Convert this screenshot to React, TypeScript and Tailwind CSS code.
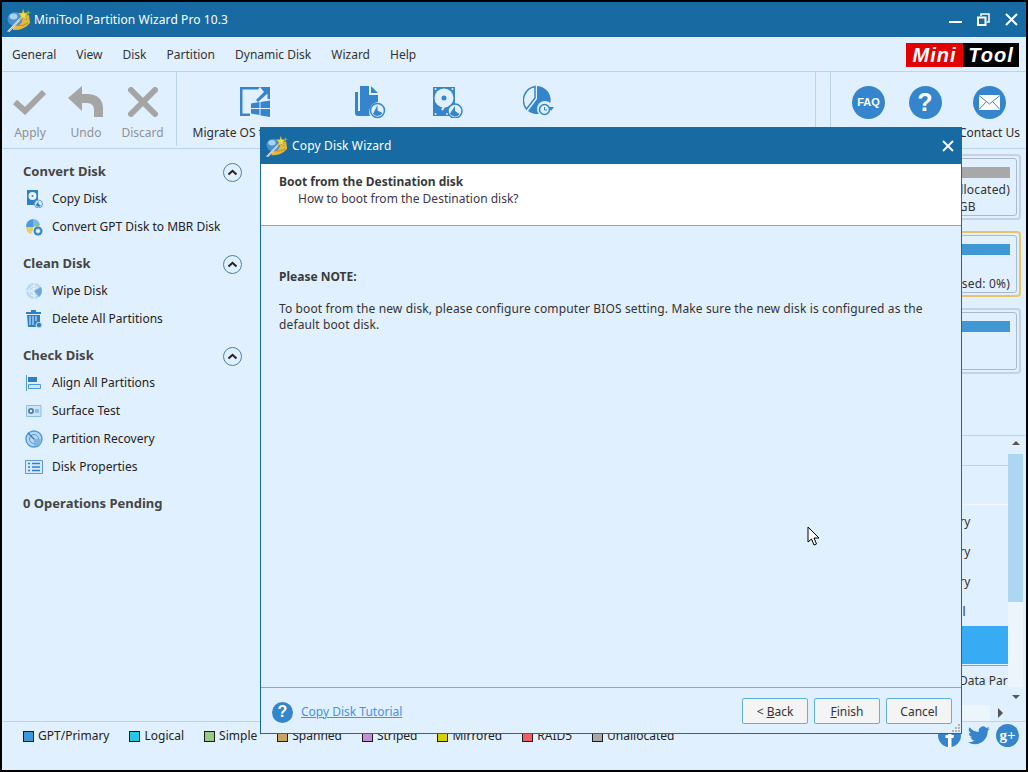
import type { ReactNode } from "react"

const FONT = "font-['Noto_Sans','Liberation_Sans',sans-serif]"

function WandLogo({ size = 24 }: { size?: number }) {
  return (
    <svg width={size} height={size} viewBox="0 0 24 24">
      <path d="M6 8 L22 7 L23 15 Q16 23 6 22 Z" fill="#e6b93a" />
      <ellipse cx="8" cy="11" rx="7.5" ry="7" fill="#4a8fd0" />
      <ellipse cx="6.5" cy="8.5" rx="4" ry="3" fill="#a9d3f2" />
      <path d="M1 24 L16 8" stroke="#f2f2f2" strokeWidth="2" />
      <path d="M1 24 L16 8" stroke="#777" strokeWidth="0.6" />
      <path d="M16 1 L17.5 5 L21.5 5 L18.5 8 L20 12 L16 10 L13 12 L14 8 L11 5 L15 5 Z" fill="#f5d94a" stroke="#7a8f2a" strokeWidth="0.5" />
      <path d="M21 2 l1 2 l2 .5 l-2 1 l-1 2 l-.6-2 l-1.8-.8 l1.8-.6 Z" fill="#7fae3a" />
      <path d="M10 17 Q15 19 21 15" stroke="#b98a20" strokeWidth="1" fill="none" />
    </svg>
  )
}

function MigrateIcon() {
  return (
    <svg width="32" height="32" viewBox="0 0 32 32" fill="#3585cc">
      <path d="M21 1 H1 V30 H11 V27.5 H3.5 V3.5 H19 Z" />
      <path d="M21 1 H31 V11 L28 8 L19 16 L17 14 L25 6 Z" />
      <path d="M28.5 9 H31 V13 H28.5 Z" />
      <path d="M12 17.5 L20.5 16 V22 H12 Z M21.5 16 L31 14.5 V22 H21.5 Z M12 23 H20.5 V29 L12 27.5 Z M21.5 23 H31 V31 L21.5 29.5 Z" />
    </svg>
  )
}

function CopyPartIcon() {
  return (
    <svg width="32" height="34" viewBox="0 0 32 34">
      <path d="M6 1 H15 V10 H24 V17 A10 10 0 0 0 16 31 H4 A3 3 0 0 1 1 28 V7 H4 V26 H6 Z" fill="#3585cc" />
      <path d="M17 1 L24 8 H17 Z" fill="#3585cc" />
      <circle cx="23.5" cy="25.5" r="7" fill="#e1f0fe" stroke="#3585cc" strokeWidth="1.5" />
      <path d="M23.5 20 V25.5 L28.5 28 A6 6 0 0 1 19 29 Z" fill="#3585cc" />
    </svg>
  )
}

function DiskClockIcon() {
  return (
    <svg width="30" height="32" viewBox="0 0 30 32">
      <path fillRule="evenodd" d="M0 1 H22 V30 H0 Z" fill="#3585cc" />
      <circle cx="11" cy="12" r="9.5" fill="#e1f0fe" />
      <circle cx="11" cy="12" r="2.5" fill="#3585cc" />
      <path d="M9 24 L14 16" stroke="#e1f0fe" strokeWidth="2" />
      <circle cx="2.5" cy="3" r="1" fill="#e1f0fe" />
      <circle cx="19.5" cy="3" r="1" fill="#e1f0fe" />
      <circle cx="2.5" cy="28" r="1" fill="#e1f0fe" />
      <circle cx="14" cy="28" r="1" fill="#e1f0fe" />
      <circle cx="22" cy="25" r="7" fill="#e1f0fe" stroke="#3585cc" strokeWidth="1.5" />
      <path d="M22 20 V25 L26.5 28 A5.5 5.5 0 0 1 17 27.5 Z" fill="#3585cc" />
    </svg>
  )
}

function PieClockIcon() {
  return (
    <svg width="32" height="34" viewBox="0 0 32 34">
      <path d="M14 1 A14 14 0 1 1 5 26 L14 14 Z" fill="#3585cc" />
      <path d="M12 1.5 V13 L3.5 24 A14 14 0 0 1 12 1.5 Z" fill="none" stroke="#3585cc" strokeWidth="1.5" />
      <circle cx="22" cy="24" r="8" fill="#e1f0fe" />
      <circle cx="21.5" cy="24.5" r="5" fill="none" stroke="#3585cc" strokeWidth="1.5" />
      <path d="M21.5 22 V25 H24" fill="none" stroke="#3585cc" strokeWidth="1" />
      <path d="M26 22 H31 L28 26 Z" fill="#3585cc" />
    </svg>
  )
}

// labels of the middle buttons sit behind the dialog, so they are left out
function ToolButton({ width, icon, label, muted }: { width: string; icon: ReactNode; label?: string; muted?: boolean }) {
  return (
    <div className={`${width} flex flex-col items-center shrink-0`}>
      <div className="h-[51px] flex items-center justify-center pt-[9px]">{icon}</div>
      {label && (
        <span className={`mt-[1px] text-[12px] leading-[18px] whitespace-nowrap ${muted ? "text-[#8f9296]" : "text-[#2c2c2c]"}`}>{label}</span>
      )}
    </div>
  )
}

function Circle({ children }: { children: ReactNode }) {
  return <div className="w-[33px] h-[33px] rounded-full bg-[#3585cc] flex items-center justify-center text-white">{children}</div>
}

function Chevron() {
  return (
    <div className="w-[19px] h-[19px] rounded-full border border-[#4d7ea8] flex items-center justify-center">
      <svg width="11" height="7" viewBox="0 0 11 7">
        <path d="M1.5 5.5 L5.5 1.8 L9.5 5.5" fill="none" stroke="#222" strokeWidth="2" />
      </svg>
    </div>
  )
}

const smallIcons: Record<string, ReactNode> = {
  copy: (
    <svg width="18" height="18" viewBox="0 0 18 18">
      <path d="M2 0 H13 V15 H2 Z" fill="#2f7fc4" />
      <circle cx="7.5" cy="6" r="4" fill="#e8f3fc" />
      <circle cx="7.5" cy="6" r="1" fill="#2f7fc4" />
      <circle cx="13.5" cy="14" r="4" fill="#e1f0fe" stroke="#5b9bd5" />
      <path d="M13.5 11 V14 L16 15.5 A3 3 0 0 1 10.8 15 Z" fill="#2f7fc4" />
    </svg>
  ),
  convert: (
    <svg width="18" height="18" viewBox="0 0 18 18">
      <path d="M8 1 A7.5 7.5 0 0 0 1 9 H8 Z" fill="#4f9ad8" />
      <path d="M8 1 A7.5 7.5 0 0 1 15 7 L8 9 Z" fill="#7bb8e8" />
      <path d="M1 9 A7.5 7.5 0 0 0 6 16 L9 9 Z" fill="#e9cf62" />
      <path d="M11 5 L15 7 L11 9 Z" fill="#8cc26a" />
      <circle cx="13" cy="13" r="4.5" fill="#3585cc" />
      <path d="M13 10.5 V15.5 M10.8 11.8 L15.2 14.2 M15.2 11.8 L10.8 14.2" stroke="#fff" strokeWidth="1.2" />
    </svg>
  ),
  wipe: (
    <svg width="18" height="18" viewBox="0 0 18 18">
      <circle cx="9" cy="9" r="8" fill="#b9d8f0" />
      <circle cx="9" cy="9" r="5" fill="none" stroke="#e9f4fc" />
      <circle cx="9" cy="9" r="2.5" fill="none" stroke="#e9f4fc" />
      <path d="M9 1 V17 M1 9 H17" stroke="#e9f4fc" />
      <path d="M9 9 L16 5 A8 8 0 0 1 14 15 Z" fill="#6fa8d8" />
    </svg>
  ),
  trash: (
    <svg width="18" height="18" viewBox="0 0 18 18">
      <path d="M6 0 H11 V2 H16 V4 H1 V2 H6 Z" fill="#2f7fc4" />
      <path d="M2 5 H15 V12 H13 A4 4 0 0 0 11 17 H3 Z" fill="#2f7fc4" />
      <path d="M5 6 V15 M8 6 V15 M11 6 V11" stroke="#e1f0fe" />
      <circle cx="14" cy="15" r="2.7" fill="#2f7fc4" stroke="#e1f0fe" strokeWidth="0.6" />
    </svg>
  ),
  align: (
    <svg width="18" height="18" viewBox="0 0 18 18">
      <path d="M1 1 H2 V17 H1 Z" fill="#4f9ad8" />
      <path d="M3 3 H12 V8 H3 Z" fill="#2f7fc4" />
      <path d="M3.5 10.5 H15.5 V14.5 H3.5 Z" fill="#cfe4f6" stroke="#4f9ad8" />
    </svg>
  ),
  surface: (
    <svg width="18" height="18" viewBox="0 0 18 18">
      <path d="M1.5 3.5 H16 V14.5 H1.5 Z" fill="#cfe4f6" stroke="#8fbde2" />
      <circle cx="6" cy="9" r="3" fill="#4f7fa8" />
      <circle cx="6" cy="9" r="1.2" fill="#e1f0fe" />
      <path d="M10 7 H14 V11 H10 Z" fill="#8fbde2" />
    </svg>
  ),
  recovery: (
    <svg width="18" height="18" viewBox="0 0 18 18">
      <circle cx="9" cy="9" r="8" fill="#b9d8f0" stroke="#4f9ad8" strokeWidth="1.4" />
      <circle cx="9" cy="9" r="4.5" fill="none" stroke="#4f9ad8" />
      <path d="M3 3 L10 10" stroke="#2f7fc4" strokeWidth="1.4" />
      <path d="M9 9 L16 9 A7 7 0 0 1 9 16 Z" fill="#7fb2de" />
    </svg>
  ),
  props: (
    <svg width="18" height="18" viewBox="0 0 18 18">
      <path d="M0.5 2.5 H17.5 V15.5 H0.5 Z" fill="#d8eafa" stroke="#5b9bd5" />
      <path d="M3 5.5 H5 M7 5.5 H15 M3 9 H5 M7 9 H15 M3 12.5 H5 M7 12.5 H15" stroke="#2f7fc4" strokeWidth="1.3" />
    </svg>
  ),
}

const groups = [
  {
    title: "Convert Disk",
    items: [
      { icon: "copy", label: "Copy Disk" },
      { icon: "convert", label: "Convert GPT Disk to MBR Disk" },
    ],
  },
  {
    title: "Clean Disk",
    items: [
      { icon: "wipe", label: "Wipe Disk" },
      { icon: "trash", label: "Delete All Partitions" },
    ],
  },
  {
    title: "Check Disk",
    items: [
      { icon: "align", label: "Align All Partitions" },
      { icon: "surface", label: "Surface Test" },
      { icon: "recovery", label: "Partition Recovery" },
      { icon: "props", label: "Disk Properties" },
    ],
  },
]

const legend = [
  { label: "GPT/Primary", color: "bg-[#3f97d6]" },
  { label: "Logical", color: "bg-[#27c7e8]" },
  { label: "Simple", color: "bg-[#9acb85]" },
  { label: "Spanned", color: "bg-[#c9a55c]" },
  { label: "Striped", color: "bg-[#c58fd6]" },
  { label: "Mirrored", color: "bg-[#d8cf00]" },
  { label: "RAID5", color: "bg-[#f06060]" },
  { label: "Unallocated", color: "bg-[#a8a8a8]" },
]

function DiskCard({ selected, bar, lines }: { selected?: boolean; bar: string; lines: string[] }) {
  return (
    <div className={`h-[66px] w-[200px] rounded-[4px] border-2 p-[2px] ${selected ? "border-[#e8c566]" : "border-[#c4d2e4]"}`}>
      <div className="h-full border border-[#aab9d0] rounded-[3px] pr-[6px] pt-[8px] flex flex-col items-end">
        <div className={`h-[11px] w-full shrink-0 ${bar}`} />
        <div className="mt-[3px] text-[12px] leading-[17px] tracking-[0.2px] text-[#333] text-left whitespace-nowrap">
          {lines.map((l, i) => (
            <div key={i} className={l.endsWith("GB") ? "-ml-[9px]" : ""}>{l}</div>
          ))}
        </div>
      </div>
    </div>
  )
}

export default function App() {
  return (
    <div className={`${FONT} relative w-[1028px] h-[772px] overflow-hidden bg-black p-[2px]`}>
      <div className="h-full flex flex-col bg-[#e1f0fe]">
        {/* Title bar */}
        <div className="h-[35px] shrink-0 bg-[#186aa3] flex items-center pl-[5px] pr-[8px] text-white">
          <WandLogo />
          <span className="ml-[3px] text-[12px] tracking-[0.1px]">MiniTool Partition Wizard Pro 10.3</span>
          <div className="ml-auto flex items-center gap-[15px]">
            <svg width="13" height="13" viewBox="0 0 13 13"><path d="M0 9 H13" stroke="#fff" strokeWidth="2" /></svg>
            <svg width="13" height="13" viewBox="0 0 13 13" fill="none" stroke="#fff"><path d="M1 4.5 H8.5 V12 H1 Z" strokeWidth="2" /><path d="M4 3 V1 H12 V9 H9.5" strokeWidth="1.5" /></svg>
            <svg width="13" height="13" viewBox="0 0 13 13"><path d="M1 1 L12 12 M12 1 L1 12" stroke="#fff" strokeWidth="2" /></svg>
          </div>
        </div>
        {/* Menu */}
        <div className="h-[35px] shrink-0 border-t border-t-white border-b border-b-[#b9d5e8] flex items-center pl-[10px] pr-[7px] text-[12px] text-[#333]">
          <div className="flex gap-[20px] pt-[1px]">
            {["General", "View", "Disk", "Partition", "Dynamic Disk", "Wizard", "Help"].map((m) => (
              <span key={m}>{m}</span>
            ))}
          </div>
          <div className="ml-auto flex h-[24px] w-[113px] font-['Liberation_Sans',sans-serif] italic font-bold text-[20px] leading-[24px] text-white">
            <span className="w-[57px] bg-[#e30000] text-center tracking-[1px]">Mini</span>
            <span className="w-[56px] bg-black text-center tracking-[1px]">Tool</span>
          </div>
        </div>
        {/* Toolbar */}
        <div className="h-[77px] shrink-0 border-b border-[#b9d5e8] flex">
          <ToolButton width="w-[56px]" muted label="Apply" icon={
            <svg width="34" height="26" viewBox="0 0 34 26"><path d="M2 13 L12 22 L31 3" fill="none" stroke="#a5a5a5" strokeWidth="6" /></svg>
          } />
          <ToolButton width="w-[56px]" muted label="Undo" icon={
            <svg width="36" height="32" viewBox="0 0 36 32"><path d="M0 12 L14 0 V8 H20 Q35 9 35 23 V31 H26 V24 Q26 17 19 17 H14 V25 Z" fill="#a5a5a5" /></svg>
          } />
          <ToolButton width="w-[57px]" muted label="Discard" icon={
            <svg width="30" height="30" viewBox="0 0 30 30"><path d="M3 3 L27 27 M27 3 L3 27" stroke="#a5a5a5" strokeWidth="6" strokeLinecap="round" /></svg>
          } />
          <div className="w-[6px] mb-[2px] border-r border-[#b9d5e8]" />
          <ToolButton width="w-[156px]" label="Migrate OS to SSD/HD" icon={<MigrateIcon />} />
          <ToolButton width="w-[74px]" icon={<CopyPartIcon />} />
          <ToolButton width="w-[82px]" icon={<DiskClockIcon />} />
          <ToolButton width="w-[100px]" icon={<PieClockIcon />} />
          <div className="w-[227px] border-r border-[#b9d5e8] mb-[2px]" />
          <div className="w-[15px] border-r border-[#b9d5e8] mb-[2px]" />
          <div className="w-[9px]" />
          <ToolButton width="w-[57px]" icon={<Circle><span className="text-[11px] font-bold font-['Liberation_Sans',sans-serif]">FAQ</span></Circle>} />
          <ToolButton width="w-[56px]" icon={<Circle><span className="text-[25px] font-bold leading-none font-['Liberation_Sans',sans-serif]">?</span></Circle>} />
          <ToolButton width="w-[73px]" label="Contact Us" icon={
            <Circle>
              <svg width="21" height="15" viewBox="0 0 21 15"><path d="M0 0 H21 V15 H0 Z" fill="#fff" /><path d="M0 0.5 L10.5 9 L21 0.5 M0 14.5 L7.5 6.5 M21 14.5 L13.5 6.5" fill="none" stroke="#3585cc" /></svg>
            </Circle>
          } />
        </div>
        {/* Main */}
        <div className="flex-1 min-h-0 flex border-b border-[#b9d5e8]">
          <div className="w-[259px] shrink-0 pl-[21px] pr-[19px] pt-[11px]">
            {groups.map((g) => (
              <div key={g.title} className="mb-[11px]">
                <div className="h-[24px] mb-[1px] flex items-center justify-between text-[13px] font-bold text-[#454545]">
                  <span>{g.title}</span>
                  <Chevron />
                </div>
                {g.items.map((it) => (
                  <div key={it.label} className="h-[28px] flex items-center text-[12px] text-[#222]">
                    <span className="w-[29px] pl-[2px] flex">{smallIcons[it.icon]}</span>
                    <span>{it.label}</span>
                  </div>
                ))}
              </div>
            ))}
            <div className="mt-[13px] text-[13px] font-bold text-[#454545] leading-[18px]">0 Operations Pending</div>
          </div>
          <div className="flex-1 min-w-0 flex flex-col text-[12px] text-[#333]">
            <div className="h-[287px] shrink-0 border-b border-[#b9d5e8] flex flex-col items-end pr-[5px] pt-[5px] gap-[11px]">
              <DiskCard bar="bg-[#a8a8a8]" lines={["(Unallocated)", "93.57 GB"]} />
              <DiskCard selected bar="bg-[#3f97d6]" lines={["\u00a0", "(Used: 0%)"]} />
              <DiskCard bar="bg-[#3f97d6]" lines={["\u00a0"]} />
            </div>
            <div className="h-[269px] shrink-0 flex pr-[3px]">
              <div className="flex-1 min-w-0 flex flex-col overflow-hidden whitespace-nowrap">
                <div className="h-[30px] shrink-0 border-b border-[#b9d5e8]" />
                <div className="h-[39px] shrink-0 mb-[2px] border-b border-[#f2f7fb]" />
                {["Primary", "Primary", "Primary", "Logical"].map((t, i) => (
                  <div key={i} className="h-[30px] shrink-0 flex items-center pl-[665px]">{t}</div>
                ))}
                <div className="h-[38px] shrink-0 -mt-[1px] bg-[#38abf5]" />
                <div className="h-[1px] shrink-0 mt-[1px] bg-[#58b0ea]" />
                <div className="h-[30px] shrink-0 flex items-center pl-[698px]">Data Par</div>
              </div>
              <div className="w-[15px] shrink-0 flex flex-col">
                <div className="h-[18px] shrink-0 flex justify-center pt-[5px]">
                  <div className="w-0 h-0 border-x-[4px] border-x-transparent border-b-[4px] border-b-[#555]" />
                </div>
                <div className="h-[148px] shrink-0 bg-[#acd6f2]" />
                <div className="h-[85px] shrink-0 bg-[#ecf5fb]" />
                <div className="flex-1 flex justify-center pt-[8px]">
                  <div className="w-0 h-0 border-x-[4px] border-x-transparent border-t-[4px] border-t-[#555]" />
                </div>
              </div>
            </div>
            <div className="flex-1 min-h-0 flex">
              <div className="flex-1 bg-[#ecf5fb]" />
              <div className="w-[36px] pl-[8px] pt-[3px]">
                <div className="w-0 h-0 border-y-[5px] border-y-transparent border-l-[5px] border-l-[#555]" />
              </div>
            </div>
          </div>
        </div>
        {/* Legend */}
        <div className="h-[48px] shrink-0 flex items-start pl-[21px] pr-[7px] pt-[5px] text-[12px] text-[#222]">
          <div className="flex gap-[20px] leading-[18px]">
            {legend.map((l) => (
              <div key={l.label} className="flex items-center gap-[4px]">
                <span className={`w-[11px] h-[11px] border border-[#1a1a1a] ${l.color}`} />
                <span>{l.label}</span>
              </div>
            ))}
          </div>
          <div className="ml-auto -mt-[3px] flex items-center gap-[6px]">
            <div className="w-[23px] h-[23px] mr-[1px] rounded-full bg-[#3585cc] flex items-end justify-center overflow-hidden">
              <svg width="10" height="18" viewBox="0 0 10 18"><path d="M3 18 V9 H0.5 V6 H3 V4 Q3 1 6.5 1 H9 V4 H7.5 Q6.5 4 6.5 5 V6 H9 L8.5 9 H6.5 V18 Z" fill="#fff" /></svg>
            </div>
            <svg width="22" height="19" viewBox="0 0 24 20"><path d="M24 2.4 A10 10 0 0 1 21.2 3.2 A5 5 0 0 0 23.3 0.5 A10 10 0 0 1 20.200 1.7 A4.900 4.900 0 0 0 11.800 6.200 A14 14 0 0 1 1.700 1 A4.900 4.900 0 0 0 3.200 7.600 A4.900 4.900 0 0 1 1 7 A4.900 4.900 0 0 0 4.900 11.800 A4.900 4.900 0 0 1 2.700 11.900 A4.900 4.900 0 0 0 7.300 15.300 A10 10 0 0 1 0 17.300 A14 14 0 0 0 7.500 19.500 C16.600 19.500 21.700 11.800 21.500 4.900 A10 10 0 0 0 24 2.400 Z" fill="#3585cc" /></svg>
            <div className="w-[23px] h-[23px] rounded-full bg-[#3585cc] flex items-center justify-center">
              <span className="text-white text-[15px] font-bold font-['Liberation_Serif',serif] leading-none">g+</span>
            </div>
          </div>
        </div>
      </div>

      {/* Copy Disk Wizard dialog */}
      <div className="absolute left-[260px] top-[127px] w-[702px] h-[607px] flex flex-col bg-[#e1f0fe] border border-[#186aa3]">
        <div className="h-[36px] shrink-0 bg-[#186aa3] flex items-center pl-[5px] pr-[7px] text-white">
          <WandLogo size={22} />
          <span className="ml-[4px] text-[12px] tracking-[0.15px]">Copy Disk Wizard</span>
          <svg className="ml-auto" width="12" height="12" viewBox="0 0 12 12"><path d="M1 1 L11 11 M11 1 L1 11" stroke="#fff" strokeWidth="1.8" /></svg>
        </div>
        <div className="h-[62px] shrink-0 bg-white border-b border-[#a3a3a3] pl-[18px] pt-[9px]">
          <div className="text-[12px] leading-[17px] font-bold text-[#3a3a3a]">Boot from the Destination disk</div>
          <div className="text-[12px] leading-[17px] pl-[19px] text-[#40364a]">How to boot from the Destination disk?</div>
        </div>
        <div className="flex-1 min-h-0 px-[18px] pt-[43px] text-[12px] leading-[16px] text-[#333]">
          <div className="font-bold text-[#3a3a3a]">Please NOTE:</div>
          <p className="mt-[16px] tracking-[0.12px]">
            To boot from the new disk, please configure computer BIOS setting. Make sure the new disk is configured as the
            <br />
            default boot disk.
          </p>
        </div>
        <div className="h-[46px] shrink-0 border-t border-[#a3a3a3] relative flex items-center pl-[11px] pr-[9px]">
          <div className="mt-[3px] flex items-center">
            <div className="w-[21px] h-[21px] rounded-full bg-[#3585cc] flex items-center justify-center text-white text-[16px] font-bold font-['Liberation_Sans',sans-serif]">?</div>
            <a className="ml-[8px] text-[12px] text-[#4a90e2] underline">Copy Disk Tutorial</a>
          </div>
          <div className="ml-auto flex gap-[6px]">
            <button className="w-[66px] h-[26px] pt-[2px] rounded-[2px] border border-[#5eb3da] bg-[#f4f4f4] text-[12px] text-[#333]">&lt; <u>B</u>ack</button>
            <button className="w-[66px] h-[26px] pt-[2px] rounded-[2px] border border-[#5eb3da] bg-[#f4f4f4] text-[12px] text-[#333]"><u>F</u>inish</button>
            <button className="w-[66px] h-[26px] pt-[2px] rounded-[2px] border border-[#5eb3da] bg-[#f4f4f4] text-[12px] text-[#333]">Cancel</button>
          </div>
          <svg className="absolute right-0 bottom-0" width="9" height="9" viewBox="0 0 9 9" fill="#b4b4b4">
            <path d="M6 0 H8 V2 H6 Z M3 3 H5 V5 H3 Z M6 3 H8 V5 H6 Z M0 6 H2 V8 H0 Z M3 6 H5 V8 H3 Z M6 6 H8 V8 H6 Z" />
          </svg>
        </div>
      </div>

      {/* Mouse cursor */}
      <svg className="absolute left-[807px] top-[526px]" width="14" height="21" viewBox="0 0 14 21">
        <path d="M1 1 V16 L4.500 13 L7 19 L9.500 18 L7 12 H12 Z" fill="#fff" stroke="#000" />
      </svg>
    </div>
  )
}
